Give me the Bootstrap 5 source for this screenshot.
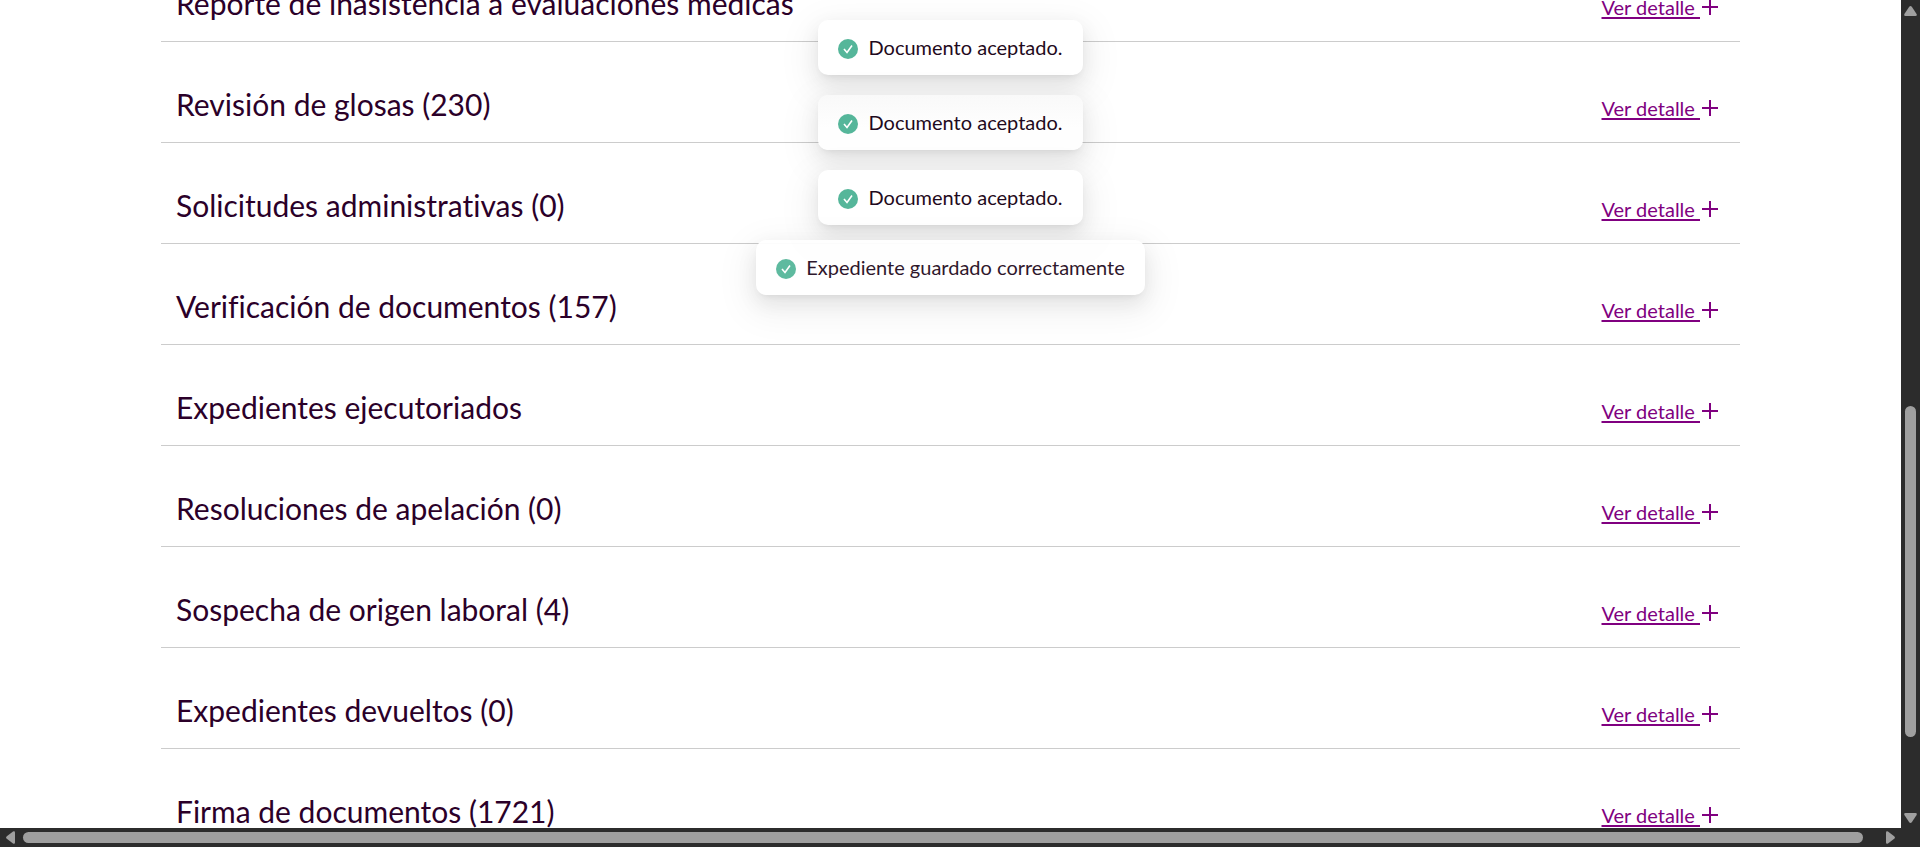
<!DOCTYPE html>
<html lang="es">
<head>
<meta charset="utf-8">
<meta name="viewport" content="width=device-width, initial-scale=1">
<title>Expedientes</title>
<link href="https://cdn.jsdelivr.net/npm/bootstrap@5.3.0/dist/css/bootstrap.min.css" rel="stylesheet">
<style>
  body { font-family: Lato, "Liberation Sans", sans-serif; color: #2b0029; background: #fff; }
  .frame { display: grid; grid-template: minmax(0, 1fr) 19px / minmax(0, 1fr) 19px; }
  .section-list { padding: 0 161px; }
  .section-row { height: 101px; padding: 42px 22px 0 15px; border-bottom: 1px solid #ccc; }
  .section-row:first-child { margin-top: -59px; }
  .section-title { font-size: 30px; line-height: 40px; font-weight: 400; font-variant-ligatures: none; }
  .detail-link { color: #800080; font-size: 20px; line-height: 30px; white-space: pre; text-decoration: none; }
  .detail-link:hover { color: #5c005c; }
  .detail-text { text-decoration: underline; text-decoration-thickness: 2px; text-underline-offset: 2px; }
  .detail-link svg { margin-left: 2px; vertical-align: 0; }
  .notices { top: 20px; gap: 20px; }
  .notice { height: 55px; padding: 0 20px; gap: 10px; border-radius: 10px; background: #fff; color: #1f0a20; font-size: 20px; line-height: 30px; white-space: nowrap;
    box-shadow: 0 8px 20px rgba(0,0,0,.08), 0 4px 8px -5px rgba(0,0,0,.12), 0 11px 35px 10px rgba(0,0,0,.05); }
  .notice svg { margin-top: 2px; }
  .notice span { margin-bottom: 2px; }
  .notice-shaded { background: linear-gradient(#f9f9f9, #fefefe 60%); }
  .notice-leaving { margin-top: -5px; opacity: .94; }
  .track { background: #2c2c2c; }
  .track-y { padding: 6px 0 5px; }
  .track-x { grid-column: 1 / -1; padding: 0 25px 0 6px; }
  .thumb { background: #9f9f9f; border-radius: 6px; }
  .lane-y { width: 11px; }
  .lane-x { height: 11px; margin: 0 23px 0 8px; }
  .thumb-y { height: 331px; }
  .before-y { flex: 390 0 0; }
  .after-y { flex: 76 0 0; }
</style>
</head>
<body>
<div class="frame vh-100 overflow-hidden">
  <main class="position-relative overflow-hidden">
    <div class="section-list" id="sections"></div>
    <div class="notices position-absolute start-0 end-0 d-flex flex-column align-items-center pe-none" role="status" id="notices"></div>
  </main>
  <div class="track track-y d-flex flex-column align-items-center" aria-hidden="true">
    <svg width="13" height="10" viewBox="0 0 13 10"><path d="M5.2.8Q6.5-.7 7.8.8L12.6 8Q13.300 10 11.500 10H1.500Q-.3 10 .4 8Z" fill="#9f9f9f"/></svg>
    <div class="before-y"></div>
    <div class="lane-y"><div class="thumb thumb-y"></div></div>
    <div class="after-y"></div>
    <svg width="13" height="10" viewBox="0 0 13 10"><path d="M5.200 9.200Q6.500 10.700 7.800 9.200L12.600 2Q13.300 0 11.500 0H1.500Q-.3 0 .4 2Z" fill="#9f9f9f"/></svg>
  </div>
  <div class="track track-x d-flex align-items-center" aria-hidden="true">
    <svg width="9" height="13" viewBox="0 0 9 13"><path d="M.8 5.200Q-.7 6.500.8 7.800L7 12.600Q9 13.300 9 11.500V1.500Q9-.3 7 .4Z" fill="#9f9f9f"/></svg>
    <div class="thumb lane-x flex-grow-1"></div>
    <svg width="9" height="13" viewBox="0 0 9 13"><path d="M8.200 5.200Q9.700 6.500 8.200 7.800L2 12.600Q0 13.300 0 11.500V1.500Q0-.3 2 .4Z" fill="#9f9f9f"/></svg>
  </div>
</div>
<script src="https://cdn.jsdelivr.net/npm/bootstrap@5.3.0/dist/js/bootstrap.bundle.min.js"></script>
<script>
  const sections = [
    'Reporte de inasistencia a evaluaciones médicas', 'Revisión de glosas (230)',
    'Solicitudes administrativas (0)', 'Verificación de documentos (157)',
    'Expedientes ejecutoriados', 'Resoluciones de apelación (0)',
    'Sospecha de origen laboral (4)', 'Expedientes devueltos (0)', 'Firma de documentos (1721)'
  ];
  document.getElementById('sections').innerHTML = sections.map(title => `
    <section class="section-row d-flex justify-content-between align-items-baseline">
      <h2 class="section-title m-0">${title}</h2>
      <a class="detail-link" href="#"><span class="detail-text">Ver detalle </span><svg width="16" height="16" viewBox="0 0 16 16" aria-hidden="true"><path d="M8 0v16M0 8h16" stroke="currentColor" stroke-width="2"/></svg></a>
    </section>`).join('');

  const notices = [
    ['Documento aceptado.', ''], ['Documento aceptado.', 'notice-shaded'],
    ['Documento aceptado.', ''], ['Expediente guardado correctamente', 'notice-leaving']
  ];
  document.getElementById('notices').innerHTML = notices.map(([text, state]) => `
    <div class="notice d-flex align-items-center ${state}">
      <svg width="20" height="20" viewBox="0 0 20 20" aria-hidden="true"><circle cx="10" cy="10" r="10" fill="#55b69a"/><path d="M6 10l3 3.500 5-7" fill="none" stroke="#fff" stroke-width="1.600"/></svg>
      <span>${text}</span>
    </div>`).join('');
</script>
</body>
</html>
